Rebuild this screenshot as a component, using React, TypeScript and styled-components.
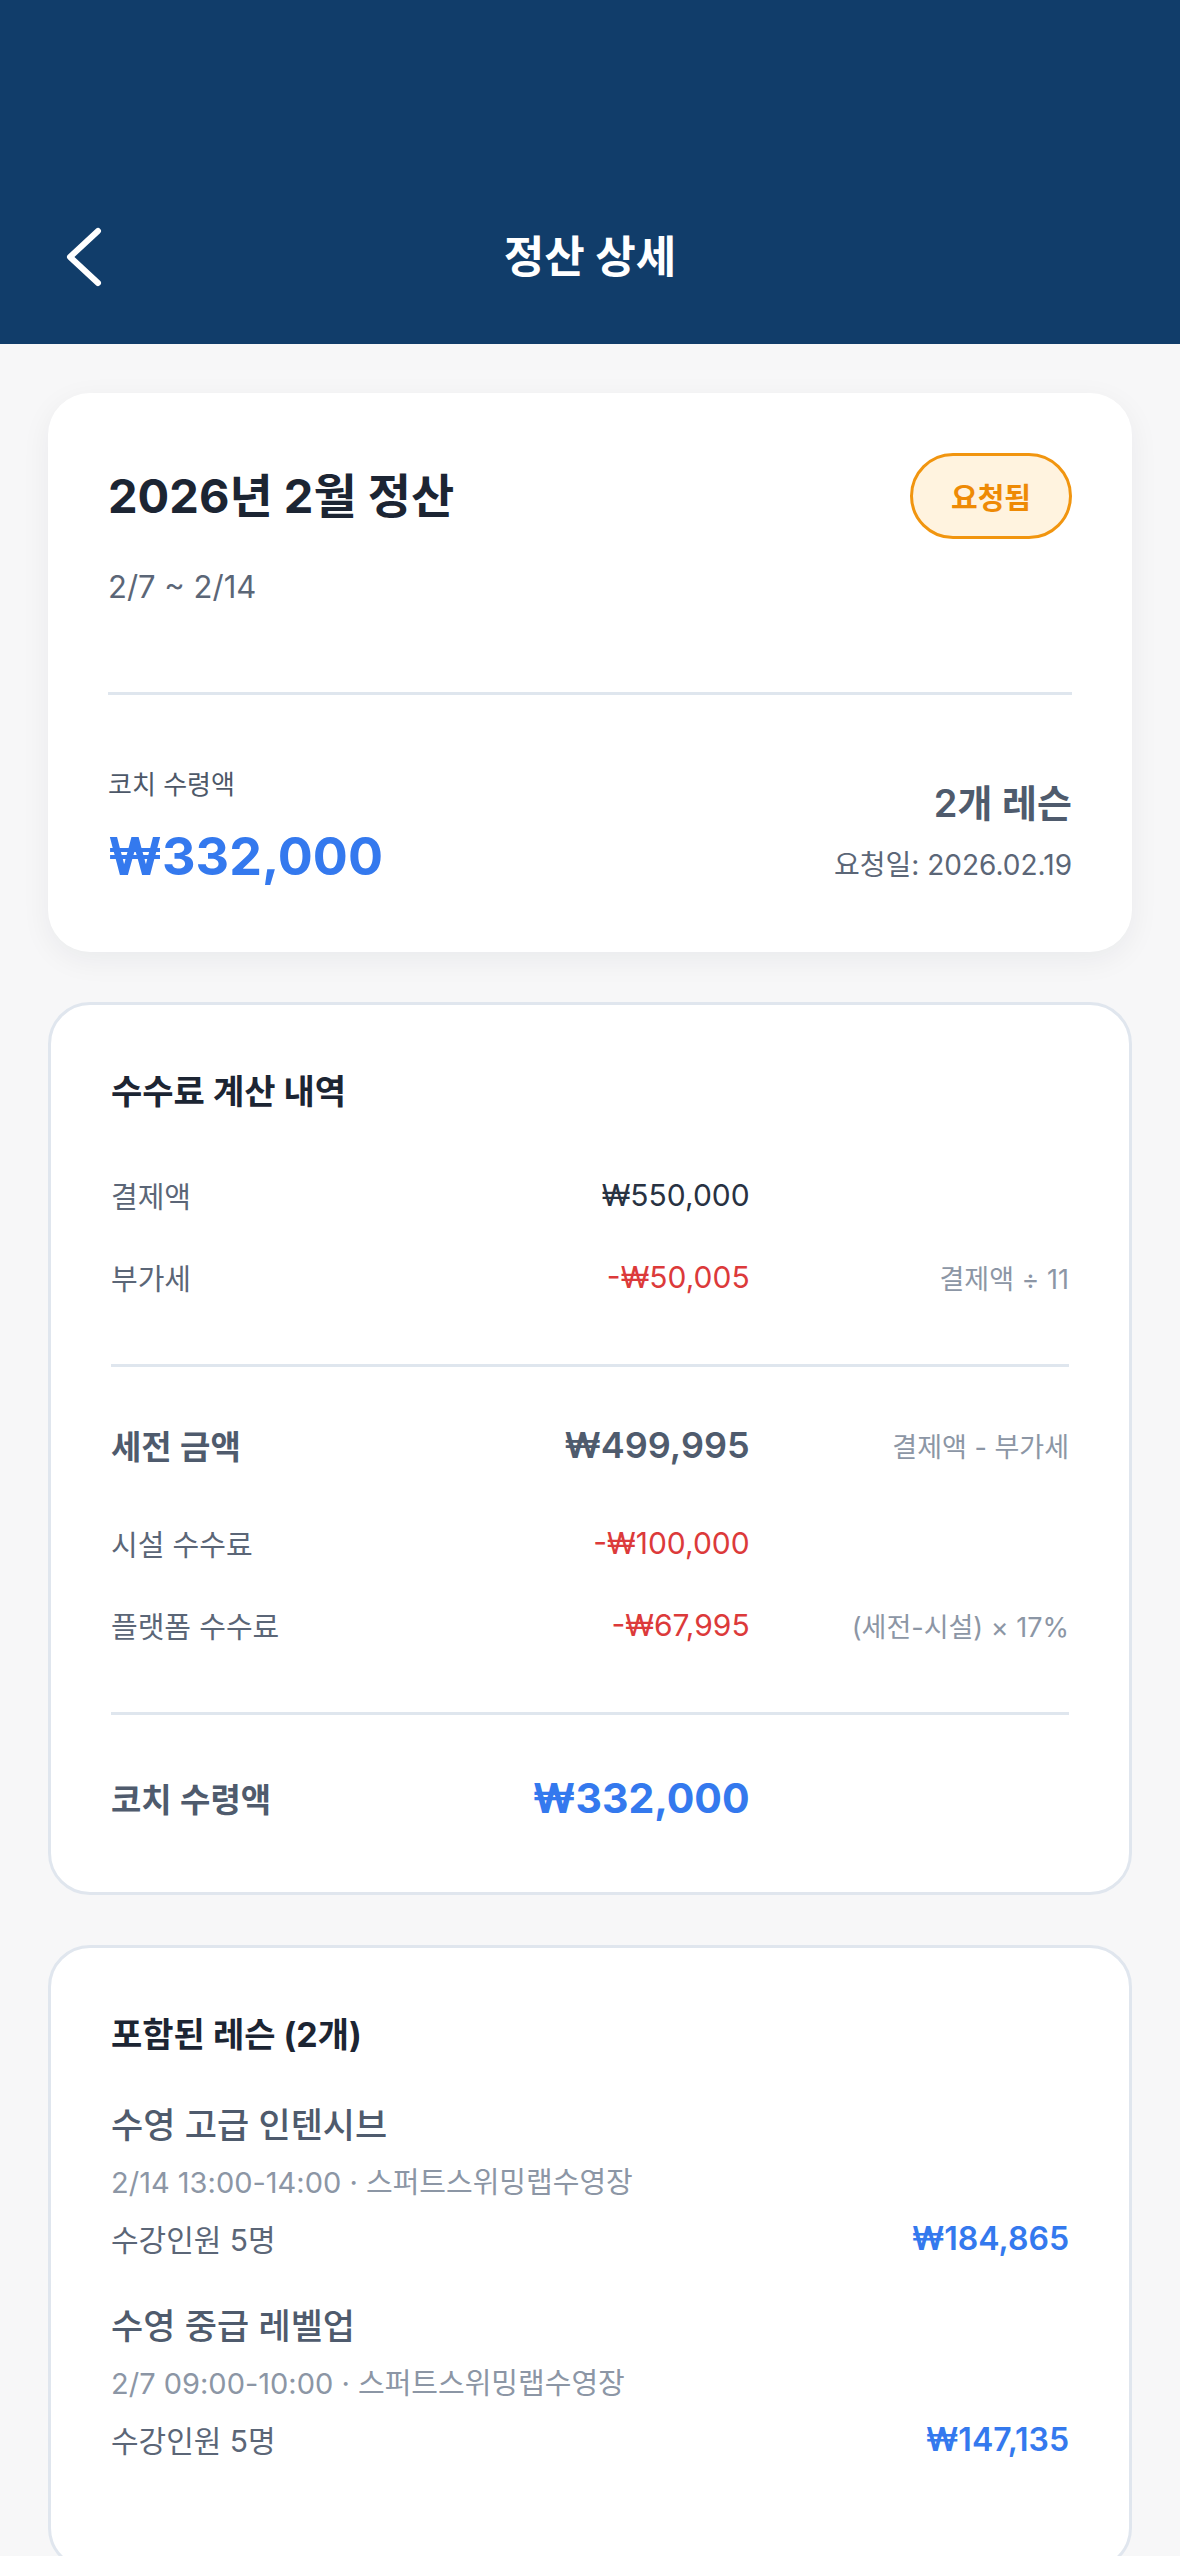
import React from "react";
import styled, { createGlobalStyle } from "styled-components";

const GlobalStyle = createGlobalStyle`
  html, body {
    margin: 0;
    padding: 0;
    background: #f7f7f8;
  }
  body {
    font-family: Inter, "Noto Sans CJK KR", "Noto Sans", sans-serif;
    -webkit-font-smoothing: antialiased;
  }
  * {
    box-sizing: border-box;
  }
`;

const colors = {
  navy: "#113d6a",
  ink: "#1c2533",
  slate: "#4f5b6d",
  label: "#5b6677",
  muted: "#8c96a5",
  blue: "#3479ee",
  red: "#dc3a3a",
  line: "#dfe6ee",
};

const Page = styled.div`
  min-height: 2556px;
  background: #f7f7f8;
`;

const Header = styled.header`
  height: 344px;
  background: ${colors.navy};
  padding-top: 202px;
`;

const NavBar = styled.div`
  display: grid;
  grid-template-columns: 1fr auto 1fr;
  align-items: center;
  height: 110px;
`;

const BackButton = styled.button`
  justify-self: start;
  display: flex;
  align-items: center;
  margin-left: 64px;
  padding: 0;
  border: 0;
  background: none;
  cursor: pointer;
`;

const HeaderTitle = styled.h1`
  margin: 0;
  font-size: 44px;
  line-height: 56px;
  font-weight: 700;
  color: #ffffff;
`;

const Content = styled.main`
  display: flex;
  flex-direction: column;
  gap: 50px;
  padding: 49px 48px 0;
`;

const SummaryCard = styled.section`
  background: #ffffff;
  border-radius: 42px;
  padding: 60px 60px 63px;
  box-shadow: 0 8px 30px rgba(20, 30, 50, 0.06);
`;

const BorderCard = styled.section<{ $bottom?: number }>`
  background: #ffffff;
  border: 3px solid #e0e6ee;
  border-radius: 42px;
  padding: 63px 60px ${(p) => p.$bottom ?? 66}px;
`;

const TopRow = styled.div`
  display: flex;
  align-items: center;
  justify-content: space-between;
  height: 86px;
`;

const CardTitle = styled.h2`
  margin: 0;
  font-size: 47px;
  line-height: 60px;
  font-weight: 700;
  color: ${colors.ink};
`;

const StatusBadge = styled.span`
  display: inline-flex;
  align-items: center;
  justify-content: center;
  width: 162px;
  height: 86px;
  border-radius: 43px;
  border: 3px solid #f1950f;
  background: #fff3df;
  color: #ee8a05;
  font-size: 29px;
  font-weight: 600;
`;

const Period = styled.div`
  margin-top: 28px;
  font-size: 31px;
  line-height: 40px;
  color: ${colors.label};
`;

const Divider = styled.hr<{ $top: number; $bottom?: number }>`
  margin: ${(p) => p.$top}px 0 ${(p) => p.$bottom ?? 0}px;
  border: 0;
  height: 3px;
  background: ${colors.line};
`;

const SummaryBottom = styled.div`
  display: flex;
  align-items: flex-end;
  justify-content: space-between;
  margin-top: 72px;
`;

const Stack = styled.div<{ $align?: "start" | "end"; $gap: number; $lift?: number }>`
  display: flex;
  flex-direction: column;
  align-items: ${(p) => (p.$align === "end" ? "flex-end" : "flex-start")};
  gap: ${(p) => p.$gap}px;
  margin-bottom: ${(p) => p.$lift ?? 0}px;
`;

const SmallLabel = styled.span`
  font-size: 26px;
  line-height: 36px;
  color: #4d5868;
`;

const BigAmount = styled.span`
  font-size: 52px;
  line-height: 64px;
  font-weight: 700;
  color: ${colors.blue};
`;

const LessonCount = styled.span`
  font-size: 38px;
  line-height: 48px;
  font-weight: 600;
  color: ${colors.slate};
`;

const RequestDate = styled.span`
  font-size: 28px;
  line-height: 36px;
  color: ${colors.label};
`;

const SectionTitle = styled.h3<{ $gap: number }>`
  margin: 0 0 ${(p) => p.$gap}px;
  font-size: 34px;
  line-height: 48px;
  font-weight: 700;
  color: ${colors.ink};
`;

const RowGroup = styled.div`
  display: flex;
  flex-direction: column;
  gap: 38px;
`;

type RowSize = "normal" | "lead" | "total";

const Row = styled.div<{ $size: RowSize }>`
  display: grid;
  grid-template-columns: repeat(3, 1fr);
  align-items: center;
  height: ${(p) => (p.$size === "total" ? 56 : p.$size === "lead" ? 48 : 44)}px;
  margin-bottom: ${(p) => (p.$size === "lead" ? 14 : 0)}px;
`;

const RowLabel = styled.span<{ $strong?: boolean }>`
  font-size: ${(p) => (p.$strong ? 33 : 29)}px;
  font-weight: ${(p) => (p.$strong ? 600 : 400)};
  color: ${(p) => (p.$strong ? colors.slate : colors.label)};
  white-space: nowrap;
`;

type Tone = "plain" | "minus" | "lead" | "total";

const RowValue = styled.span<{ $tone: Tone }>`
  text-align: right;
  white-space: nowrap;
  font-size: ${(p) => (p.$tone === "total" ? 41 : p.$tone === "lead" ? 36 : 30)}px;
  font-weight: ${(p) => (p.$tone === "total" ? 700 : p.$tone === "lead" ? 600 : 400)};
  color: ${(p) =>
    p.$tone === "minus"
      ? colors.red
      : p.$tone === "total"
      ? colors.blue
      : p.$tone === "lead"
      ? colors.slate
      : "#283242"};
`;

const RowNote = styled.span`
  text-align: right;
  white-space: nowrap;
  font-size: 27px;
  color: ${colors.muted};
`;

const LessonList = styled.div`
  display: flex;
  flex-direction: column;
  gap: 44px;
`;

const Lesson = styled.div`
  display: flex;
  flex-direction: column;
`;

const LessonTitle = styled.div`
  font-size: 35px;
  line-height: 48px;
  font-weight: 500;
  color: ${colors.slate};
`;

const LessonMeta = styled.div`
  margin-top: 15px;
  font-size: 29px;
  line-height: 38px;
  color: ${colors.muted};
`;

const LessonFooter = styled.div`
  display: flex;
  align-items: center;
  justify-content: space-between;
  margin-top: 16px;
  height: 40px;
`;

const Attendees = styled.span`
  font-size: 30px;
  color: ${colors.label};
`;

const LessonPrice = styled.span`
  font-size: 32px;
  font-weight: 600;
  color: ${colors.blue};
`;

const ChevronLeft = () => (
  <svg width="40" height="62" viewBox="0 0 40 62" fill="none">
    <path
      d="M34 5 L6 31 L34 57"
      stroke="#ffffff"
      strokeWidth="6"
      strokeLinecap="round"
      strokeLinejoin="round"
    />
  </svg>
);

type BreakdownLine = {
  label: string;
  value: string;
  note?: string;
  tone: Tone;
  size: RowSize;
};

const vatLines: BreakdownLine[] = [
  { label: "결제액", value: "₩550,000", tone: "plain", size: "normal" },
  { label: "부가세", value: "-₩50,005", note: "결제액 ÷ 11", tone: "minus", size: "normal" },
];

const feeLines: BreakdownLine[] = [
  { label: "세전 금액", value: "₩499,995", note: "결제액 - 부가세", tone: "lead", size: "lead" },
  { label: "시설 수수료", value: "-₩100,000", tone: "minus", size: "normal" },
  { label: "플랫폼 수수료", value: "-₩67,995", note: "(세전-시설) × 17%", tone: "minus", size: "normal" },
];

const lessons = [
  {
    title: "수영 고급 인텐시브",
    meta: "2/14 13:00-14:00 · 스퍼트스위밍랩수영장",
    attendees: "수강인원 5명",
    price: "₩184,865",
  },
  {
    title: "수영 중급 레벨업",
    meta: "2/7 09:00-10:00 · 스퍼트스위밍랩수영장",
    attendees: "수강인원 5명",
    price: "₩147,135",
  },
];

const BreakdownRow: React.FC<{ line: BreakdownLine }> = ({ line }) => (
  <Row $size={line.size}>
    <RowLabel $strong={line.size !== "normal"}>{line.label}</RowLabel>
    <RowValue $tone={line.tone}>{line.value}</RowValue>
    <RowNote>{line.note ?? ""}</RowNote>
  </Row>
);

export default function App() {
  return (
    <Page>
      <GlobalStyle />
      <Header>
        <NavBar>
          <BackButton aria-label="뒤로">
            <ChevronLeft />
          </BackButton>
          <HeaderTitle>정산 상세</HeaderTitle>
          <span />
        </NavBar>
      </Header>

      <Content>
        <SummaryCard>
          <TopRow>
            <CardTitle>2026년 2월 정산</CardTitle>
            <StatusBadge>요청됨</StatusBadge>
          </TopRow>
          <Period>2/7 ~ 2/14</Period>
          <Divider $top={85} />
          <SummaryBottom>
            <Stack $gap={22}>
              <SmallLabel>코치 수령액</SmallLabel>
              <BigAmount>₩332,000</BigAmount>
            </Stack>
            <Stack $align="end" $gap={20} $lift={6}>
              <LessonCount>2개 레슨</LessonCount>
              <RequestDate>요청일: 2026.02.19</RequestDate>
            </Stack>
          </SummaryBottom>
        </SummaryCard>

        <BorderCard>
          <SectionTitle $gap={57}>수수료 계산 내역</SectionTitle>
          <RowGroup>
            {vatLines.map((line) => (
              <BreakdownRow key={line.label} line={line} />
            ))}
          </RowGroup>
          <Divider $top={65} $bottom={54} />
          <RowGroup>
            {feeLines.map((line) => (
              <BreakdownRow key={line.label} line={line} />
            ))}
          </RowGroup>
          <Divider $top={65} $bottom={55} />
          <Row $size="total">
            <RowLabel $strong>코치 수령액</RowLabel>
            <RowValue $tone="total">₩332,000</RowValue>
            <span />
          </Row>
        </BorderCard>

        <BorderCard $bottom={108}>
          <SectionTitle $gap={42}>포함된 레슨 (2개)</SectionTitle>
          <LessonList>
            {lessons.map((lesson) => (
              <Lesson key={lesson.title}>
                <LessonTitle>{lesson.title}</LessonTitle>
                <LessonMeta>{lesson.meta}</LessonMeta>
                <LessonFooter>
                  <Attendees>{lesson.attendees}</Attendees>
                  <LessonPrice>{lesson.price}</LessonPrice>
                </LessonFooter>
              </Lesson>
            ))}
          </LessonList>
        </BorderCard>
      </Content>
    </Page>
  );
}
